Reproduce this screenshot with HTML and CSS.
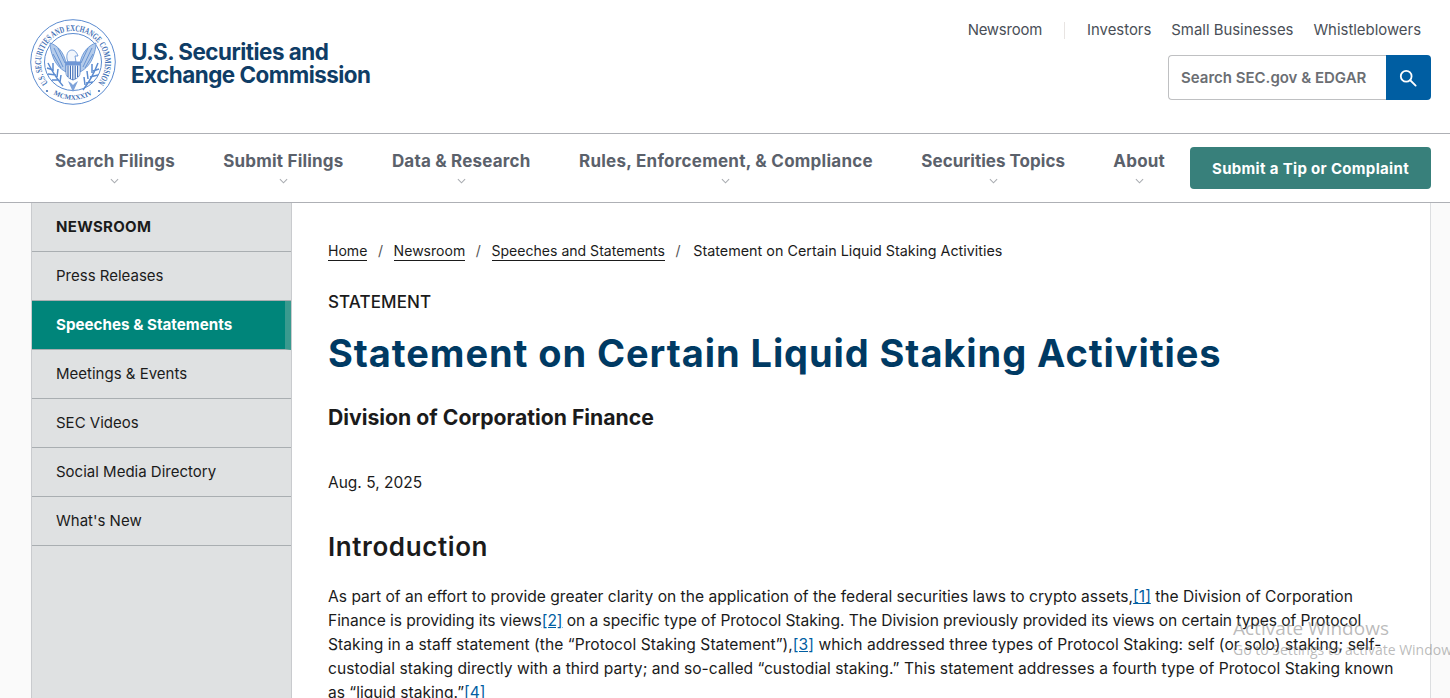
FILE: index.html
```html
<!DOCTYPE html>
<html lang="en">
<head>
<meta charset="utf-8">
<title>Statement on Certain Liquid Staking Activities</title>
<link rel="stylesheet" href="styles.css">
</head>
<body>
<header class="masthead">
  <a class="brand" href="#">
    <svg class="seal" viewBox="0 0 86 86" aria-hidden="true">
      <defs>
        <path id="topArc" d="M18 64 A32 32 0 1 1 68 64"/>
        <path id="botArc" d="M21 73.500 A37 37 0 0 0 65 73.500"/>
      </defs>
      <circle cx="43" cy="43" r="42.300" fill="none" stroke="#5b8bd0" stroke-width="1"/>
      <circle cx="43" cy="43" r="28.500" fill="none" stroke="#5b8bd0" stroke-width="1"/>
      <text class="seal-text"><textPath href="#topArc" textLength="143" lengthAdjust="spacingAndGlyphs">U.S. SECURITIES AND EXCHANGE COMMISSION</textPath></text>
      <text class="seal-text seal-year"><textPath href="#botArc" startOffset="3" textLength="41" lengthAdjust="spacingAndGlyphs">MCMXXXIV</textPath></text>
      <circle cx="17" cy="72" r="1.100" fill="#3f6fb5"/>
      <circle cx="69" cy="72" r="1.100" fill="#3f6fb5"/>
      <path d="M20 24 C27 26 34 33 36 44 L36 53 C30 50 25 44 23 38 C21 33 20 28 20 24 Z" fill="#b4cbea" stroke="#5b8bd0" stroke-width=".8"/>
      <path d="M66 24 C59 26 52 33 50 44 L50 53 C56 50 61 44 63 38 C65 33 66 28 66 24 Z" fill="#b4cbea" stroke="#5b8bd0" stroke-width=".8"/>
      <path d="M24 29 L33 48 M28 29 L35 44 M23 35 L31 49 M62 29 L53 48 M58 29 L51 44 M63 35 L55 49" stroke="#5f8dd0" stroke-width=".9" fill="none"/>
      <path d="M37 40 C36 34 39 31 42 31 C45 31 47 34 48 37 L45 37 L46 43 L38 43 Z" fill="#f2f6fc" stroke="#5b8bd0" stroke-width=".8"/>
      <path d="M36 43 H50 V54 C50 58 46 60 43 61 C40 60 36 58 36 54 Z" fill="#fff" stroke="#4f7fc6" stroke-width=".8"/>
      <path d="M36 43 H50 V46.500 H36 Z" fill="#6f97d6"/>
      <path d="M38 46.500 V58 M40.400 46.500 V60 M42.800 46.500 V61 M45.200 46.500 V60 M47.600 46.500 V58" stroke="#4472ba" stroke-width="1.200"/>
      <path d="M18 44 C21 50 27 60 33 67 M17 49 L23 51 M18 55 L26 56 M22 61 L29 61 M23 44 L23 52 M28 50 L27 58 M31 56 L30 63" stroke="#5b8bd0" stroke-width="1.500" fill="none"/>
      <path d="M68 44 C65 52 60 62 53 71 M69 50 L63 52 M68 56 L60 58 M63 63 L56 64 M62 45 L62 54 M57 52 L58 60 M54 58 L55 66" stroke="#5b8bd0" stroke-width="1.500" fill="none"/>
      <path d="M38 62 L43 73 L48 62 L45 64 L43 66 L41 64 Z" fill="#7fa3da"/>
    </svg>
    <span class="wordmark">U.S. Securities and<br>Exchange Commission</span>
  </a>
  <div class="utility">
    <nav class="top-links">
      <a class="top-link top-link-first" href="#">Newsroom</a>
      <a class="top-link" href="#">Investors</a>
      <a class="top-link" href="#">Small Businesses</a>
      <a class="top-link" href="#">Whistleblowers</a>
    </nav>
    <form class="search">
      <span class="search-field">Search SEC.gov &amp; EDGAR</span>
      <button class="search-btn" type="button" aria-label="Search">
        <svg class="search-icon" viewBox="0 0 20 20" width="18" height="18" fill="none" stroke="#fff" stroke-width="2"><circle cx="8" cy="8" r="6"/><path d="M12.500 12.500 L18.500 18.500" stroke-linecap="round"/></svg>
      </button>
    </form>
  </div>
</header>
<nav class="mainnav">
  <ul class="mainnav-list">
    <li class="mainnav-item">Search Filings<svg class="chev" viewBox="0 0 10 6"><path d="M1 1 L5 5 L9 1"/></svg></li>
    <li class="mainnav-item">Submit Filings<svg class="chev" viewBox="0 0 10 6"><path d="M1 1 L5 5 L9 1"/></svg></li>
    <li class="mainnav-item">Data &amp; Research<svg class="chev" viewBox="0 0 10 6"><path d="M1 1 L5 5 L9 1"/></svg></li>
    <li class="mainnav-item mainnav-wide">Rules, Enforcement, &amp; Compliance<svg class="chev" viewBox="0 0 10 6"><path d="M1 1 L5 5 L9 1"/></svg></li>
    <li class="mainnav-item mainnav-tight">Securities Topics<svg class="chev" viewBox="0 0 10 6"><path d="M1 1 L5 5 L9 1"/></svg></li>
    <li class="mainnav-item">About<svg class="chev" viewBox="0 0 10 6"><path d="M1 1 L5 5 L9 1"/></svg></li>
  </ul>
  <a class="tip-btn" href="#">Submit a Tip or Complaint</a>
</nav>
<div class="page">
  <aside class="sidebar">
    <div class="side-head">NEWSROOM</div>
    <a class="side-item" href="#">Press Releases</a>
    <a class="side-item side-active" href="#">Speeches &amp; Statements</a>
    <a class="side-item" href="#">Meetings &amp; Events</a>
    <a class="side-item" href="#">SEC Videos</a>
    <a class="side-item" href="#">Social Media Directory</a>
    <a class="side-item" href="#">What's New</a>
  </aside>
  <main class="content">
    <div class="crumbs">
      <a href="#">Home</a><span class="sep">/</span><a href="#">Newsroom</a><span class="sep">/</span><a href="#">Speeches and Statements</a><span class="sep">/</span><span class="crumb-current">Statement on Certain Liquid Staking Activities</span>
    </div>
    <div class="kicker">STATEMENT</div>
    <h1 class="title">Statement on Certain Liquid Staking Activities</h1>
    <div class="byline">Division of Corporation Finance</div>
    <div class="date">Aug. 5, 2025</div>
    <h2 class="section">Introduction</h2>
    <p class="para"><span class="line">As part of an effort to provide greater clarity on the application of the federal securities laws to crypto assets,<a class="fn" href="#">[1]</a> the Division of Corporation</span>
    <span class="line line-narrow">Finance is providing its views<a class="fn" href="#">[2]</a> on a specific type of Protocol Staking. The Division previously provided its views on certain types of Protocol</span>
    <span class="line line-open">Staking in a staff statement (the “Protocol Staking Statement”),<a class="fn" href="#">[3]</a> which addressed three types of Protocol Staking: self (or solo) staking; self-</span>
    <span class="line line-wide">custodial staking directly with a third party; and so-called “custodial staking.” This statement addresses a fourth type of Protocol Staking known</span>
    <span class="line">as “liquid staking.”<a class="fn" href="#">[4]</a></span></p>
  </main>
</div>
<div class="watermark">
  <div class="wm-title">Activate Windows</div>
  <div class="wm-sub">Go to Settings to activate Windows.</div>
</div>
</body>
</html>
```
FILE: styles.css
```css
* { box-sizing: border-box; }
html, body { margin: 0; height: 100%; overflow: hidden; }
body {
  display: flex;
  flex-direction: column;
  background: #fafafa;
  color: #1b1b1b;
  font-family: "Inter", "Liberation Sans", sans-serif;
  font-size: 16px;
  position: relative;
}
a { color: inherit; text-decoration: none; }

.masthead {
  height: 134px;
  flex: none;
  display: flex;
  justify-content: space-between;
  background: #fff;
  border-bottom: 1px solid #aeb0b5;
  padding: 0 19px 0 30px;
}
.brand { display: flex; align-items: center; gap: 15px; height: 124px; }
.seal { width: 86px; height: 86px; flex: none; }
.seal-text { font-family: "Liberation Serif", serif; font-size: 9px; font-weight: 700; fill: #3f6fb5; }
.seal-year { font-size: 7px; }
.wordmark {
  font-weight: 700;
  font-size: 22.400px;
  line-height: 23px;
  letter-spacing: -0.5px;
  color: #0f3d66;
  padding-top: 2px;
}
.utility { display: flex; flex-direction: column; align-items: flex-end; }
.top-links { display: flex; margin-top: 22px; height: 17px; align-items: center; padding-right: 10px; font-size: 14.900px; line-height: 17px; color: #4a4f57; }
.top-link { margin-left: 20px; }
.top-link-first { padding-right: 22px; margin-right: 2px; border-right: 1px solid #e8e4e2; letter-spacing: -.2px; }
.search {
  display: flex;
  margin-top: 16px;
  width: 263px;
  height: 45px;
}
.search-field {
  flex: 1;
  border: 1px solid #bfc0c2;
  border-right: 0;
  border-radius: 4px 0 0 4px;
  padding-left: 12px;
  display: flex;
  align-items: center;
  font-weight: 600;
  font-size: 15px;
  color: #6b6e73;
}
.search-btn {
  width: 45px;
  background: #005ea2;
  border: 0;
  border-radius: 0 4px 4px 0;
  padding: 0;
  display: flex;
  align-items: center;
  justify-content: center;
}
.search-icon { margin-right: 2px; }

.mainnav {
  height: 69px;
  flex: none;
  display: flex;
  justify-content: space-between;
  background: #fff;
  border-bottom: 1px solid #aeb0b5;
  padding: 13px 19px 0 55px;
}
.mainnav-list { display: flex; gap: 48.400px; list-style: none; margin: 0; padding: 0; }
.mainnav-item {
  display: flex;
  flex-direction: column;
  align-items: center;
  font-weight: 700;
  font-size: 17px;
  line-height: 28px;
  letter-spacing: .2px;
  color: #5b616b;
}
.mainnav-wide { letter-spacing: .26px; }
.mainnav-tight { letter-spacing: .02px; }
.chev { width: 9px; height: 6px; margin-top: 3px; fill: none; stroke: #a9acb1; stroke-width: 1.200; }
.tip-btn {
  width: 241px;
  height: 42px;
  background: #38807b;
  color: #fff;
  border-radius: 4px;
  font-weight: 700;
  font-size: 15px;
  letter-spacing: .33px;
  display: flex;
  align-items: center;
  justify-content: center;
}

.page {
  flex: 1;
  min-height: 0;
  margin: 0 19px 0 31px;
  background: #fff;
  border-right: 1px solid #dcdee0;
  display: flex;
}
.sidebar {
  width: 261px;
  flex: none;
  background: #dfe1e2;
  border-left: 1px solid #c9cbce;
  border-right: 1px solid #c9cbce;
}
.side-head {
  height: 49px;
  padding-left: 24px;
  padding-bottom: 1px;
  display: flex;
  align-items: center;
  font-weight: 700;
  font-size: 15px;
  letter-spacing: .3px;
  border-bottom: 1px solid #a9aeb1;
}
.side-item {
  height: 49px;
  padding-left: 24px;
  padding-bottom: 2px;
  display: flex;
  align-items: center;
  font-size: 15px;
  border-bottom: 1px solid #a9aeb1;
}
.side-active {
  background: #00857a;
  color: #fff;
  font-weight: 700;
  font-size: 15.200px;
  border-right: 6px solid #3a9a8f;
}
.content { flex: 1; padding: 38px 0 0 36px; min-width: 0; }
.crumbs { font-size: 14.050px; line-height: 20px; display: flex; }
.crumbs a { border-bottom: 1px solid #1b1b1b; line-height: 20px; height: 20px; }
.crumb-current { font-size: 14.350px; margin-left: 2px; }
.sep { margin: 0 10.600px; color: #555; }
.kicker { margin-top: 30px; font-size: 17px; font-weight: 500; line-height: 22px; letter-spacing: .1px; }
.title {
  margin: 16px 0 0;
  font-size: 38px;
  line-height: 48px;
  font-weight: 700;
  letter-spacing: .92px;
  color: #003a63;
}
.byline { margin-top: 25px; font-size: 21.200px; font-weight: 700; line-height: 30px; }
.date { margin-top: 39px; font-size: 15.500px; line-height: 24px; }
.section { margin: 36px 0 0; font-size: 26px; font-weight: 600; line-height: 32px; letter-spacing: .6px; }
.para { margin: 22px 0 0; font-size: 15.600px; line-height: 24px; white-space: nowrap; }
.line { display: block; }
.line-narrow { letter-spacing: -.07px; }
.line-open { letter-spacing: .035px; }
.line-wide { letter-spacing: .05px; }
.fn { color: #005ea2; text-decoration: underline; }

.watermark {
  position: absolute;
  left: 1233px;
  top: 616px;
  white-space: nowrap;
  color: rgba(120, 120, 120, .5);
  pointer-events: none;
}
.wm-title { font-size: 19px; line-height: 24px; font-family: "Open Sans", sans-serif; }
.wm-sub { font-size: 14px; line-height: 20px; font-family: "Open Sans", sans-serif; }
```
